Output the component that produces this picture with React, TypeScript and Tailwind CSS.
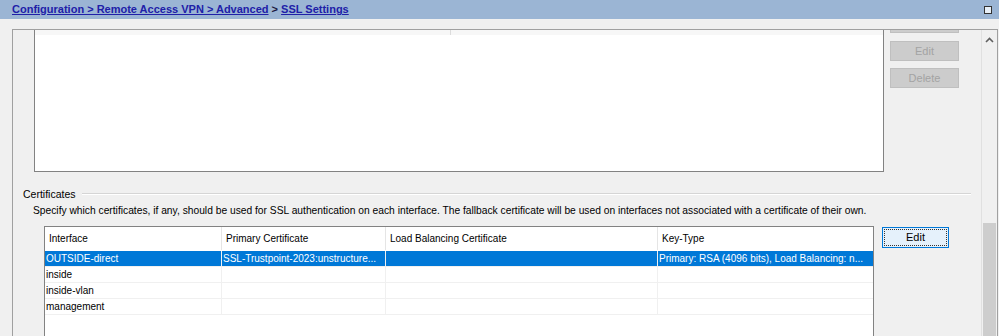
import React from 'react'

const rows = [
  { iface: 'OUTSIDE-direct', primary: 'SSL-Trustpoint-2023:unstructure...', lb: '', key: 'Primary: RSA (4096 bits), Load Balancing: n...', selected: true },
  { iface: 'inside', primary: '', lb: '', key: '' },
  { iface: 'inside-vlan', primary: '', lb: '', key: '' },
  { iface: 'management', primary: '', lb: '', key: '' },
]

const cols = ['w-[177px]', 'w-[164px]', 'w-[272px]', 'flex-1']

export default function App() {
  return (
    <div className="w-[999px] h-[336px] overflow-hidden bg-[#f0f0f0] flex flex-col text-black" style={{ fontFamily: '"Liberation Sans", Arial, sans-serif' }}>
      {/* Breadcrumb bar */}
      <div className="h-[19px] shrink-0 bg-[#9bb5d4] flex items-center justify-between pl-[12px] pr-[4px]">
        <div className="text-[11px] font-bold leading-none">
          <span className="text-[#2020a8] underline">Configuration &gt; Remote Access VPN &gt; Advanced</span>
          <span className="text-[#1a1a40]"> &gt; </span>
          <span className="text-[#2020a8] underline">SSL Settings</span>
        </div>
        <div className="w-[8px] h-[8px] border border-[#333] bg-[#e8f0f8] mr-[3px]" />
      </div>

      <div className="h-[10px] shrink-0" />

      {/* Scroll panel */}
      <div className="ml-[12px] mr-[1px] flex-1 flex border-l border-t border-r border-[#a0a0a0] min-h-0">
        <div className="flex-1 flex flex-col min-w-0">
          {/* Upper table (scrolled) */}
          <div className="flex">
            <div className="w-[21px] shrink-0" />
            <div className="w-[850px] h-[142px] bg-white border-l border-r border-b border-[#828282] flex flex-col">
              <div className="h-[5px] bg-[#f7f7f7] flex">
                <div className="w-[416px] border-r border-[#dcdcdc]" />
              </div>
            </div>
            <div className="ml-[6px] w-[69px] flex flex-col">
              <div className="h-[3px] bg-[#cccccc] border-b border-l border-r border-[#bfbfbf]" />
              <div className="mt-[8px] h-[20px] bg-[#cccccc] border border-[#bfbfbf] flex items-center justify-center text-[11px] text-[#a3a3a3]">Edit</div>
              <div className="mt-[7px] h-[20px] bg-[#cccccc] border border-[#bfbfbf] flex items-center justify-center text-[11px] text-[#a3a3a3]">Delete</div>
            </div>
          </div>

          {/* Certificates group */}
          <div className="mt-[15px] flex items-center pl-[10px] pr-[10px]">
            <span className="text-[10.5px] leading-[14px]">Certificates</span>
            <div className="flex-1 ml-[6px] h-[2px] border-t border-[#d5d5d5] border-b border-b-white" />
          </div>
          <div className="mt-[3px] pl-[20px] text-[10.25px] leading-[14px] whitespace-nowrap">
            Specify which certificates, if any, should be used for SSL authentication on each interface. The fallback certificate will be used on interfaces not associated with a certificate of their own.
          </div>

          <div className="mt-[8px] flex items-start">
            <div className="w-[31px] shrink-0" />
            <div className="w-[830px] h-[120px] bg-white border-l border-t border-r border-[#828282] flex flex-col text-[10px]">
              <div className="h-[24px] flex border-b border-white">
                {['Interface', 'Primary Certificate', 'Load Balancing Certificate', 'Key-Type'].map((h, i) => (
                  <div key={h} className={`${cols[i]} ${i < 3 ? 'border-r border-[#e5e5e5]' : ''} pl-[4px] flex items-center`}>{h}</div>
                ))}
              </div>
              {rows.map((r) => (
                <div key={r.iface} className={`h-[16px] flex border-b ${r.selected ? 'bg-[#0078d7] text-white border-[#f0f0f0]' : 'border-[#f0f0f0]'}`}>
                  {[r.iface, r.primary, r.lb, r.key].map((c, i) => (
                    <div key={i} className={`${cols[i]} ${i < 3 ? 'border-r border-[#f0f0f0]' : ''} pl-[1px] flex items-center whitespace-nowrap overflow-hidden`}>{c}</div>
                  ))}
                </div>
              ))}
            </div>
            <div className="ml-[8px] mt-[1px] w-[67px] h-[21px] border border-[#0078d7] bg-[#e5f1fb] p-[1px]">
              <div className="w-full h-full border border-dotted border-[#333] flex items-center justify-center text-[11px]">Edit</div>
            </div>
          </div>
        </div>

        {/* Scrollbar */}
        <div className="w-[16px] shrink-0 border-l border-[#e0e0e0] flex flex-col">
          <div className="h-[20px] flex items-center justify-center">
            <svg width="9" height="6" viewBox="0 0 9 6"><path d="M1 5 L4.5 1.5 L8 5" fill="none" stroke="#606060" strokeWidth="1.6" /></svg>
          </div>
          <div className="flex-1" />
          <div className="h-[113px] mx-[1px] bg-[#cdcdcd]" />
        </div>
      </div>
    </div>
  )
}
